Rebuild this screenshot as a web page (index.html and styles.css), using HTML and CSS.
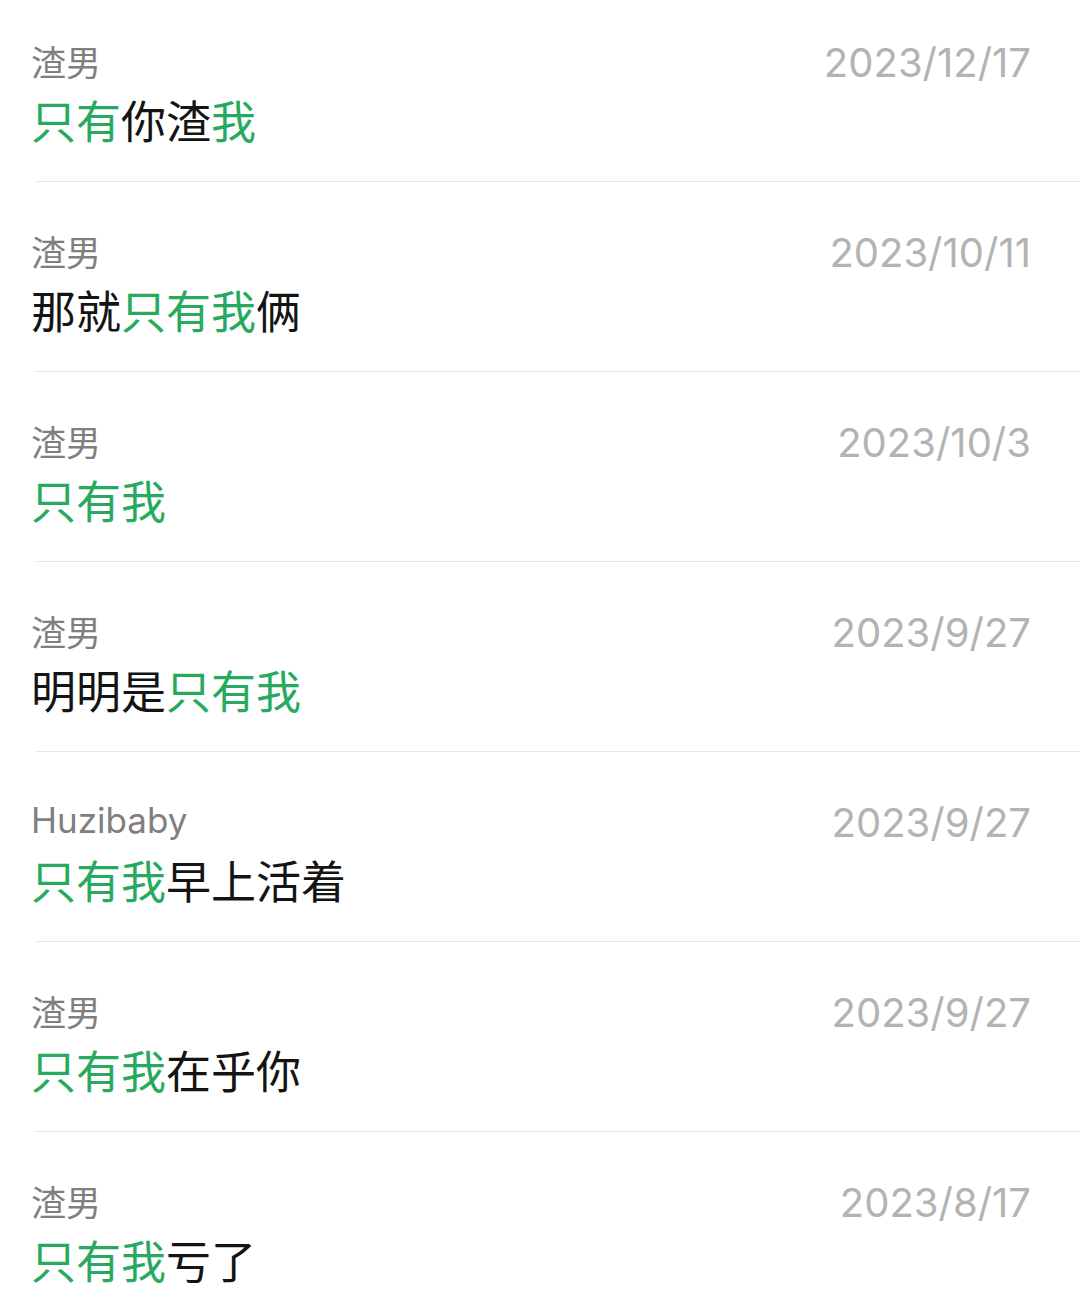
FILE: index.html
```html
<!doctype html>
<html>
  <head>
    <title>搜索结果</title>
    <link rel="stylesheet" href="styles.css">
  </head>
  <body>
    <ul class="results">
      <li class="result">
        <div class="head">
          <span class="sender">渣男</span>
          <span class="date">2023/12/17</span>
        </div>
        <p class="message"><em>只有</em>你渣<em>我</em></p>
      </li>
      <li class="result">
        <div class="head">
          <span class="sender">渣男</span>
          <span class="date">2023/10/11</span>
        </div>
        <p class="message">那就<em>只有我</em>俩</p>
      </li>
      <li class="result">
        <div class="head">
          <span class="sender">渣男</span>
          <span class="date">2023/10/3</span>
        </div>
        <p class="message"><em>只有我</em></p>
      </li>
      <li class="result">
        <div class="head">
          <span class="sender">渣男</span>
          <span class="date">2023/9/27</span>
        </div>
        <p class="message">明明是<em>只有我</em></p>
      </li>
      <li class="result">
        <div class="head">
          <span class="sender">Huzibaby</span>
          <span class="date">2023/9/27</span>
        </div>
        <p class="message"><em>只有我</em>早上活着</p>
      </li>
      <li class="result">
        <div class="head">
          <span class="sender">渣男</span>
          <span class="date">2023/9/27</span>
        </div>
        <p class="message"><em>只有我</em>在乎你</p>
      </li>
      <li class="result">
        <div class="head">
          <span class="sender">渣男</span>
          <span class="date">2023/8/17</span>
        </div>
        <p class="message"><em>只有我</em>亏了</p>
      </li>
    </ul>
  </body>
</html>
```

FILE: styles.css
```css
body {
  margin: 0;
  background: #fff;
  font-family: Inter, "Noto Sans CJK SC", sans-serif;
  overflow: hidden;
}

.results {
  list-style: none;
  margin: -8px 0 0 0;
  padding: 0;
}

.result {
  margin-left: 36px;
  padding: 48px 49px 32px 0;
  height: 109px;
  border-bottom: 1px solid #e6e6e6;
}

.head {
  display: flex;
  justify-content: space-between;
  align-items: center;
  height: 40px;
  margin-left: -5px;
}

.sender {
  font-size: 35px;
  color: #7f7f7f;
}

.date {
  font-size: 40px;
  color: #b3b3b3;
  position: relative;
  top: 2px;
}

.message {
  margin: 17px 0 0 -5px;
  font-size: 45px;
  line-height: 52px;
  color: #141414;
}

.message em {
  font-style: normal;
  color: #27aa60;
}
```
